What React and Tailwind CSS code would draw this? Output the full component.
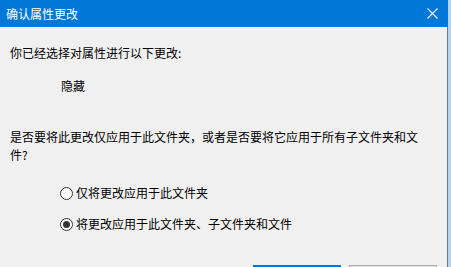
import { useState } from "react";

const font = { fontFamily: '"Noto Sans CJK SC", "Noto Sans", sans-serif' };

function Radio({ checked, label, onClick }) {
  return (
    <div className="flex items-center h-[16px] cursor-default" onClick={onClick}>
      <span className="flex items-center justify-center w-[13px] h-[13px] rounded-full border border-[#333333] bg-white ml-[60px]">
        {checked && <span className="w-[7px] h-[7px] rounded-full bg-[#333333]" />}
      </span>
      <span className="ml-[3px] text-[12px] leading-[16px] text-[#000000]">{label}</span>
    </div>
  );
}

export default function App() {
  const [choice, setChoice] = useState("all");

  return (
    <div className="flex w-[451px] h-[267px] overflow-hidden bg-[#b9d3ec]" style={font}>
      <div className="flex flex-col w-[448px] h-full">
        {/* title bar */}
        <div className="shrink-0 flex items-center justify-between h-[27px] bg-[#0078d7] pl-[6px] pr-[10px]">
          <span className="text-[12px] leading-[16px] text-white">确认属性更改</span>
          <svg width="11" height="11" viewBox="0 0 11 11">
            <path d="M0.5 0.5 L10.5 10.5 M10.5 0.5 L0.5 10.5" stroke="#ffffff" strokeWidth="1.1" />
          </svg>
        </div>

        {/* body */}
        <div className="flex-1 min-h-0 bg-[#f0f0f0] border-r border-[#6b7b90] text-[#000000]">
          <p className="pt-[18px] pl-[10px] text-[12px] leading-[16px]">你已经选择对属性进行以下更改:</p>
          <p className="mt-[17px] pl-[61px] text-[12px] leading-[16px]">隐藏</p>
          <p className="mt-[34px] ml-[10px] w-[412px] text-[12px] leading-[18px]">
            是否要将此更改仅应用于此文件夹，或者是否要将它应用于所有子文件夹和文件?
          </p>

          <div className="mt-[21px] flex flex-col gap-[15px]">
            <Radio checked={choice === "folder"} label="仅将更改应用于此文件夹" onClick={() => setChoice("folder")} />
            <Radio checked={choice === "all"} label="将更改应用于此文件夹、子文件夹和文件" onClick={() => setChoice("all")} />
          </div>

          <div className="mt-[33px] flex justify-end gap-[8px] pr-[10px]">
            <button aria-label="确定" className="w-[88px] h-[23px] bg-[#e5f1fb] border-2 border-[#0078d7]" />
            <button aria-label="取消" className="w-[88px] h-[23px] bg-[#e1e1e1] border border-[#adadad]" />
          </div>
        </div>
      </div>
    </div>
  );
}
